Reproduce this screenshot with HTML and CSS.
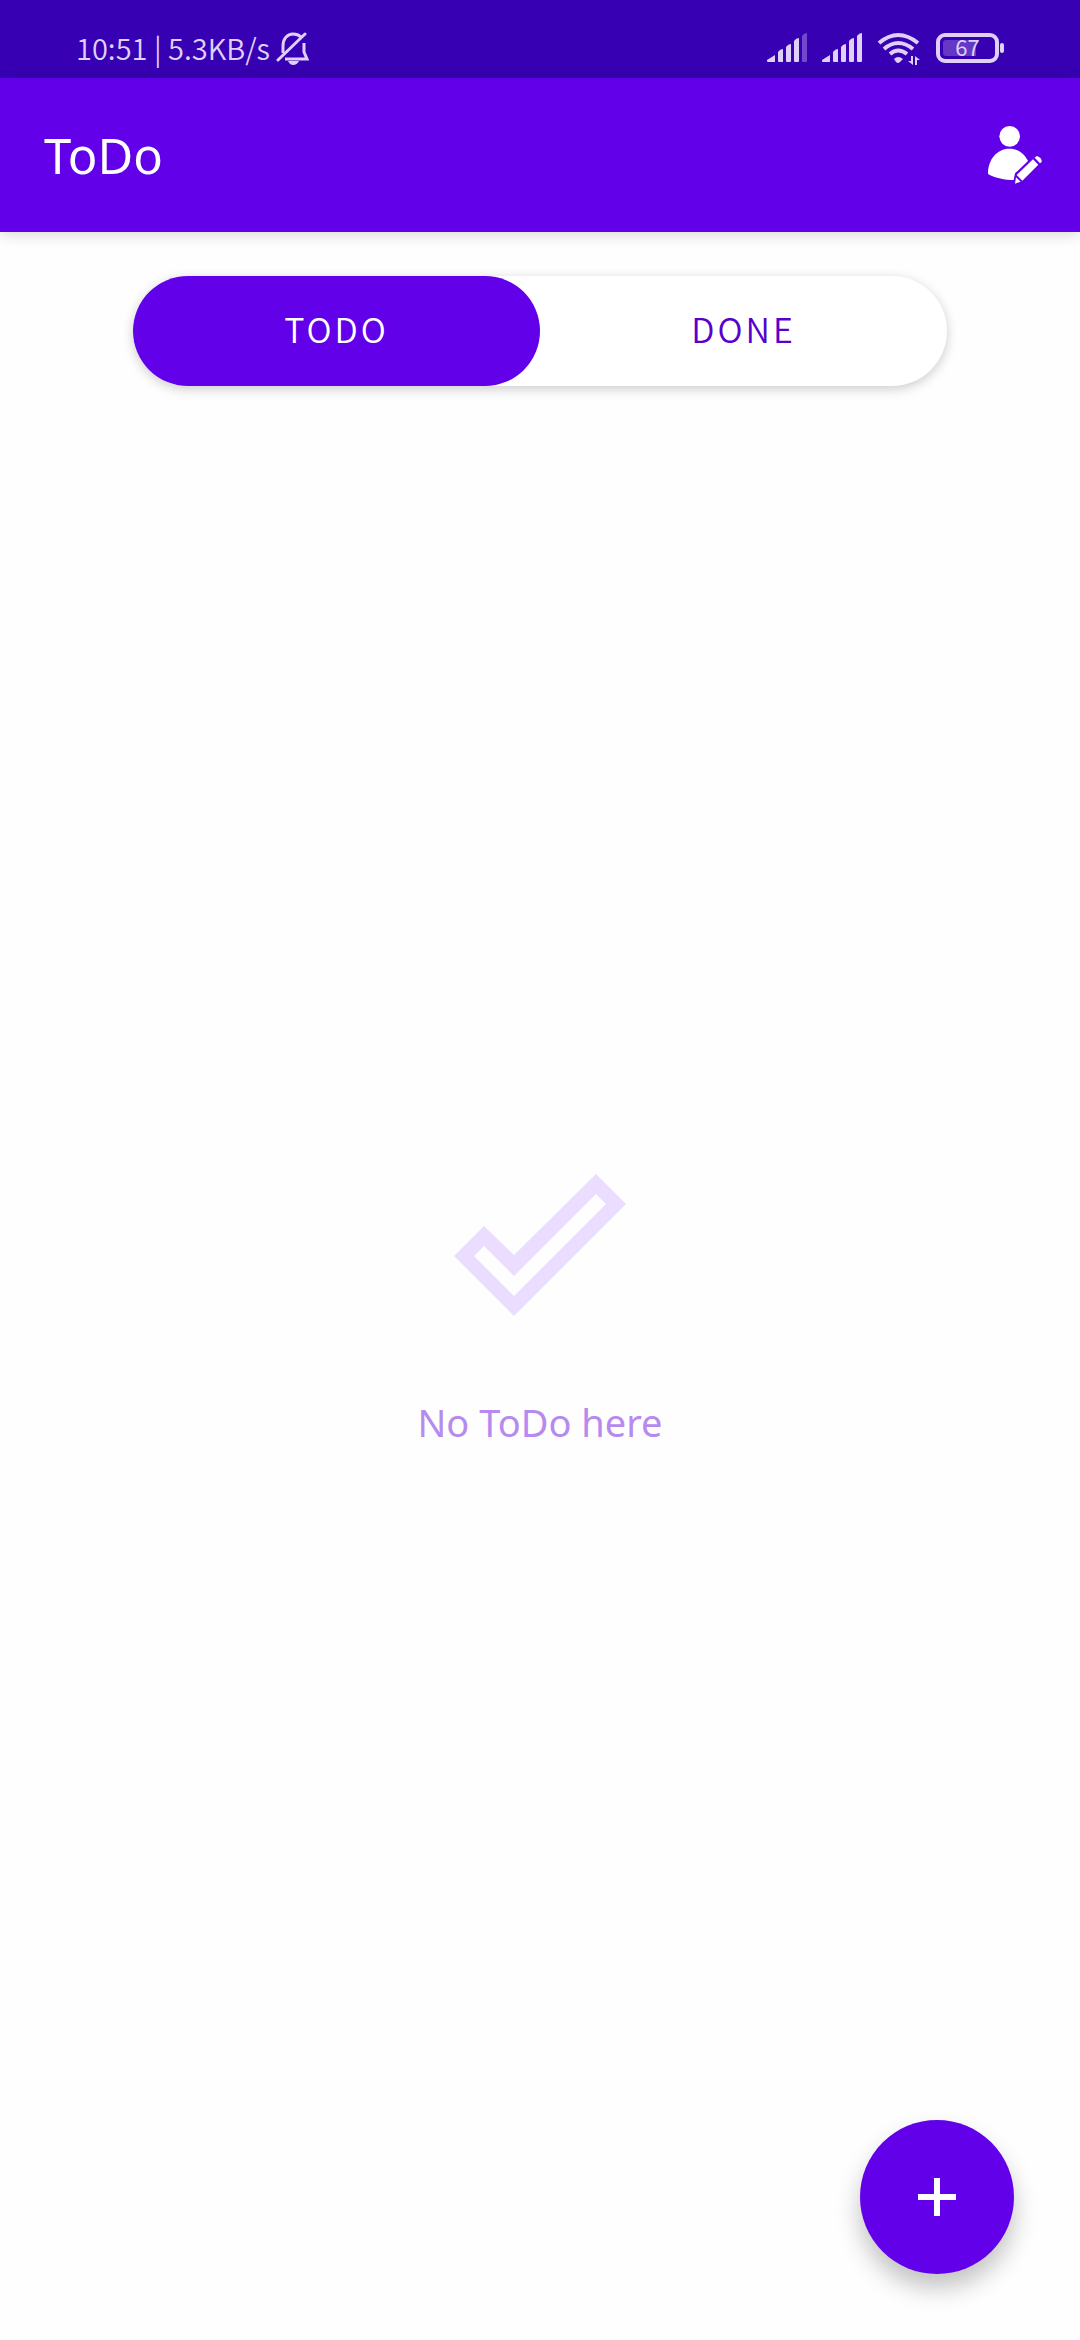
FILE: index.html
```html
<!DOCTYPE html>
<html lang="en">
<head>
<meta charset="utf-8">
<meta name="viewport" content="width=device-width, initial-scale=1">
<title>ToDo</title>
<link rel="stylesheet" href="styles.css">
</head>
<body>
<div class="status-bar">
  <span class="status-text">10:51 | 5.3KB/s</span>
  <svg class="bell" width="34" height="34" viewBox="0 0 34 34" aria-label="Silent">
    <path d="M7 21V14C7 7 11 2 17 2C20 2 23 3 25 5M28 11V20L31 27H9" fill="none" stroke="currentColor" stroke-width="3"/>
    <path d="M2 28L29 2" fill="none" stroke="currentColor" stroke-width="3" stroke-linecap="round"/>
    <path d="M12 29H23Q21 33 17 33Q14 33 12 29Z" fill="currentColor"/>
  </svg>
  <div class="status-icons">
    <svg width="40" height="34" viewBox="0 0 40 34" aria-label="SIM 1 signal">
      <path d="M0 28L8 23V30H1Q0 30 0 29ZM11 20Q13 17 16 17V30H12Q11 30 11 29ZM19 15Q21 12 24 12V29Q24 30 23 30H20Q19 30 19 29ZM27 9Q29 6 32 6V29Q32 30 31 30H28Q27 30 27 29Z" fill="currentColor"/>
      <path d="M35 4Q37 1 40 1V29Q40 30 39 30H36Q35 30 35 29Z" fill="currentColor" opacity=".35"/>
    </svg>
    <svg width="40" height="34" viewBox="0 0 40 34" aria-label="SIM 2 signal">
      <path d="M0 28L8 23V30H1Q0 30 0 29ZM11 20Q13 17 16 17V30H12Q11 30 11 29ZM19 15Q21 12 24 12V29Q24 30 23 30H20Q19 30 19 29ZM27 9Q29 6 32 6V29Q32 30 31 30H28Q27 30 27 29ZM35 4Q37 1 40 1V29Q40 30 39 30H36Q35 30 35 29Z" fill="currentColor"/>
    </svg>
    <svg class="wifi" width="44" height="34" viewBox="0 0 44 34" aria-label="Wi-Fi">
      <g fill="none" stroke="currentColor" stroke-width="4">
        <path d="M2 11Q21 -5 41 11"/>
        <path d="M7 17Q21 5 36 17"/>
        <path d="M13 22Q21 15 30 22"/>
      </g>
      <path d="M17 27Q21 23 26 27L23 30Q21 32 19 30Z" fill="currentColor"/>
      <path d="M36 24V33L31 29H34V24ZM38 33V24L43 28H40V33Z" fill="currentColor"/>
    </svg>
    <div class="battery">
      <svg width="69" height="34" viewBox="0 0 69 34" aria-hidden="true">
        <rect x="2" y="3" width="59" height="26" rx="7" fill="none" stroke="currentColor" stroke-width="4"/>
        <path d="M10 8H40V24H10Q7 24 7 21V11Q7 8 10 8Z" fill="currentColor" opacity=".27"/>
        <rect x="64" y="11" width="4" height="10" rx="2" fill="currentColor"/>
      </svg>
      <span class="battery-level">67</span>
    </div>
  </div>
</div>

<header class="app-bar">
  <h1 class="title">ToDo</h1>
  <button class="profile" type="button" aria-label="Edit profile">
    <svg width="56" height="60" viewBox="0 0 168 180">
      <circle cx="68" cy="37" r="31" fill="#fff"/>
      <path d="M3 150C3 106 30 74 67 74C92 74 112 88 123 111L84 148L80 168C54 168 25 163 3 150Z" fill="#fff"/>
      <path d="M89 153L138 106L154 122L106 170ZM143 101L148 97C158 97 165 105 164 114L159 118ZM87 160L101 173L84 179Z" fill="#fff"/>
    </svg>
  </button>
</header>

<main class="content">
  <div class="tabs">
    <button class="tab tab-active" type="button" aria-pressed="true">TODO</button>
    <button class="tab" type="button" aria-pressed="false">DONE</button>
  </div>
  <section class="empty">
    <svg width="172" height="142" viewBox="0 0 172 142" aria-hidden="true">
      <path fill="#eaddff" fill-rule="evenodd" d="M142 0L172 30L60 142L0 82L30 52L60 81ZM142 20L60 102L30 72L20 82L60 122L152 30Z"/>
    </svg>
    <p class="empty-text">No ToDo here</p>
  </section>
</main>

<button class="fab" type="button" aria-label="Add a task">
  <svg width="40" height="40" viewBox="0 0 40 40"><path d="M1 20H39M20 1V39" stroke="#fff" stroke-width="6"/></svg>
</button>
</body>
</html>
```
FILE: styles.css
```css
* {
  box-sizing: border-box;
}

body {
  margin: 0;
  min-height: 100vh;
  display: flex;
  flex-direction: column;
  background: #fefefe;
  font-family: "Noto Sans", sans-serif;
  font-weight: 400;
}

button {
  border: 0;
  padding: 0;
  background: none;
  font: inherit;
  cursor: pointer;
}

svg {
  display: block;
}

.status-bar {
  display: flex;
  align-items: center;
  gap: 6px;
  height: 78px;
  padding: 20px 75px 0 76px;
  background: #3700b3;
  color: #dfd0f8;
}

.status-text {
  padding-bottom: 4px;
  font-family: "Noto Sans CJK SC", "Noto Sans", sans-serif;
  font-size: 29px;
  font-weight: 350;
  line-height: 40px;
}

.status-icons {
  display: flex;
  gap: 15px;
  margin-left: auto;
}

.battery {
  position: relative;
}

.battery-level {
  position: absolute;
  inset: 0 6px 0 0;
  font-family: "Noto Sans CJK SC", "Noto Sans", sans-serif;
  font-size: 22px;
  line-height: 28px;
  text-align: center;
}

.app-bar {
  display: flex;
  align-items: center;
  justify-content: space-between;
  height: 154px;
  padding: 0 37px 0 44px;
  background: #6200ea;
  color: #fff;
  box-shadow: 0 2px 14px rgba(0, 0, 0, .16);
}

.title {
  margin: 0;
  font-size: 49px;
  font-weight: 400;
  line-height: 60px;
}

.profile {
  padding-bottom: 2px;
}

.content {
  flex: 1;
  display: flex;
  flex-direction: column;
  align-items: center;
  padding-top: 44px;
}

.tabs {
  display: flex;
  width: 814px;
  max-width: 90%;
  border-radius: 55px;
  background: #fff;
  box-shadow: 0 3px 12px rgba(0, 0, 0, .2);
}

.tab {
  flex: 1;
  height: 110px;
  padding-bottom: 6px;
  border-radius: 55px;
  color: #5a00cc;
  font-family: "Noto Sans CJK SC", "Noto Sans", sans-serif;
  font-size: 34px;
  font-weight: 350;
  letter-spacing: 3px;
}

.tab-active {
  background: #6200ea;
  color: #fff;
}

.empty {
  flex: 1;
  display: flex;
  flex-direction: column;
  align-items: center;
  justify-content: center;
  gap: 78px;
  padding-bottom: 102px;
}

.empty-text {
  margin: 0;
  color: #b78af0;
  font-size: 38px;
  line-height: 56px;
}

.fab {
  position: fixed;
  right: 66px;
  bottom: 66px;
  display: grid;
  place-items: center;
  width: 154px;
  height: 154px;
  border-radius: 50%;
  background: #6200ea;
  box-shadow: 0 14px 24px rgba(0, 0, 0, .24);
}
```
